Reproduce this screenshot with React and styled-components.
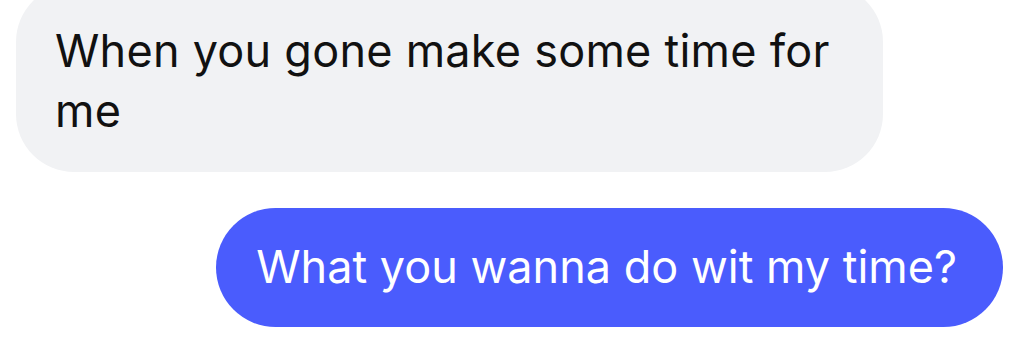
import React from 'react'
import styled, { createGlobalStyle } from 'styled-components'

const GlobalStyle = createGlobalStyle`
  html, body {
    margin: 0;
    padding: 0;
    background: #ffffff;
    overflow: hidden;
  }
  body {
    font-family: Inter, "Noto Sans", "Liberation Sans", sans-serif;
    -webkit-font-smoothing: antialiased;
  }
`

const Thread = styled.div`
  display: flex;
  flex-direction: column;
  width: 1027px;
  height: 342px;
  overflow: hidden;
`

const Bubble = styled.div`
  box-sizing: border-box;
  font-size: 45px;
  line-height: 60px;
  letter-spacing: 0;
  border-radius: 58px;
  background: ${props => (props.mine ? '#4a5cfd' : '#f1f2f4')};
  color: ${props => (props.mine ? '#ffffff' : '#111111')};
  align-self: ${props => (props.mine ? 'flex-end' : 'flex-start')};
`

const Incoming = styled(Bubble)`
  width: 867px;
  margin: -16px 0 0 16px;
  padding: 37px 40px 31px 39px;
  letter-spacing: 0.25px;
`

const Outgoing = styled(Bubble)`
  margin: 36px 24px 0 0;
  height: 119px;
  padding: 29px 46px 30px 40px;
  border-radius: 60px;
  white-space: nowrap;
`

export default function App() {
  return (
    <>
      <GlobalStyle />
      <Thread>
        <Incoming>When you gone make some time for me</Incoming>
        <Outgoing mine>What you wanna do wit my time?</Outgoing>
      </Thread>
    </>
  )
}
